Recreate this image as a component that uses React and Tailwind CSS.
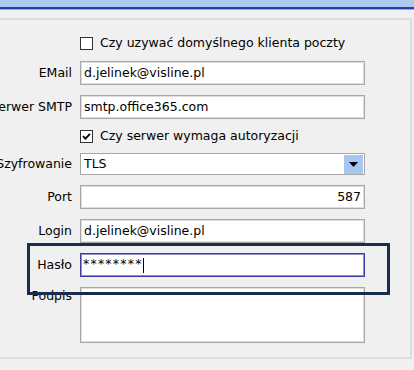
import React from "react";

function Label({ children, top }) {
  return (
    <div
      className={
        "w-[72px] shrink-0 flex justify-end whitespace-nowrap " +
        (top ? "items-start pt-[3px]" : "items-center")
      }
    >
      <span>{children}</span>
    </div>
  );
}

function Input({ children, right, h = "h-[24px]" }) {
  return (
    <div
      className={
        "w-[285px] bg-white border border-[#a7a7a7] shadow-[inset_0_0_0_1px_#dedede] flex items-center px-[3px] whitespace-nowrap " +
        h +
        (right ? " justify-end" : "")
      }
    >
      {children}
    </div>
  );
}

function Checkbox({ checked, children }) {
  return (
    <div className="ml-[80px] flex items-center h-[13px] gap-[7px] whitespace-nowrap">
      <div className="w-[13px] h-[13px] border border-[#333333] bg-white flex items-center justify-center shrink-0">
        {checked && (
          <svg width="9" height="9" viewBox="0 0 9 9">
            <path d="M1 4.2 L3.4 6.6 L8 1.8" stroke="#000" strokeWidth="1.8" fill="none" />
          </svg>
        )}
      </div>
      <span>{children}</span>
    </div>
  );
}

export default function App() {
  return (
    <div className="w-[414px] h-[370px] bg-[#f0f0f0] relative overflow-hidden font-['DejaVu_Sans',sans-serif] text-[12.5px] leading-none text-black">
      <div className="h-[7px] bg-[#adcaf0]" />
      <div className="h-[2px] bg-[#1d42a8]" />
      <div className="h-[1px] bg-[#8eaee6]" />
      <div className="mt-[8px] w-[412px] h-[341px] border-t-2 border-r-2 border-b-2 border-[#dcdcdc] pt-[17px] flex flex-col">
        <Checkbox>Czy uzywać domyślnego klienta poczty</Checkbox>
        <div className="mt-[11px] flex gap-[8px]">
          <Label>EMail</Label>
          <Input>d.jelinek@visline.pl</Input>
        </div>
        <div className="mt-[10px] flex gap-[8px]">
          <Label>Serwer SMTP</Label>
          <Input>smtp.office365.com</Input>
        </div>
        <div className="mt-[11px]">
          <Checkbox checked>Czy serwer wymaga autoryzacji</Checkbox>
        </div>
        <div className="mt-[10px] flex gap-[8px]">
          <Label>Szyfrowanie</Label>
          <div className="w-[285px] h-[22px] bg-white border border-[#a7a7a7] flex items-center pl-[3px] pr-[1px]">
            <span className="flex-1">TLS</span>
            <div className="w-[19px] h-[19px] bg-[#a8c6f2] flex items-center justify-center">
              <svg width="9" height="5" viewBox="0 0 9 5">
                <path d="M0 0 L9 0 L4.5 5 Z" fill="#000" />
              </svg>
            </div>
          </div>
        </div>
        <div className="mt-[10px] flex gap-[8px]">
          <Label>Port</Label>
          <Input right>587</Input>
        </div>
        <div className="mt-[10px] flex gap-[8px]">
          <Label>Login</Label>
          <Input>d.jelinek@visline.pl</Input>
        </div>
        <div className="mt-[10px] flex gap-[8px]">
          <Label>Hasło</Label>
          <div className="w-[285px] h-[24px] bg-white border border-[#3c3ca4] shadow-[inset_0_0_0_1px_#8f8fcf] flex items-center px-[2px]">
            <span className="text-[12.5px] tracking-[1.2px] -mt-[2px]">********</span>
            <span className="w-[1px] h-[15px] bg-black" />
          </div>
        </div>
        <div className="mt-[10px] flex gap-[8px]">
          <Label top>Podpis</Label>
          <Input h="h-[56px]" />
        </div>
      </div>
      <div className="absolute left-[27px] top-[243px] w-[363px] h-[52px] border-[3px] border-[#1b2c4f]" />
    </div>
  );
}
